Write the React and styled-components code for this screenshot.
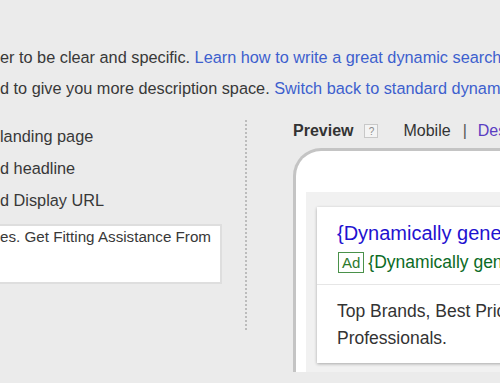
import React from 'react';
import styled, { createGlobalStyle } from 'styled-components';

const GlobalStyle = createGlobalStyle`
    html, body {
        margin: 0;
        padding: 0;
        background: #ebebeb;
        overflow: hidden;
    }

    body {
        font-family: "Liberation Sans", Arial, sans-serif;
        color: #333;
    }
`

const App = () => {
    return (
        <Page>
            <GlobalStyle />
            <Intro>
                <p>er to be clear and specific. <Link href="#">Learn how to write a great dynamic search ads</Link></p>
                <p>d to give you more description space. <Link href="#">Switch back to standard dynamic search ads</Link></p>
            </Intro>
            <Columns>
                <Options>
                    <li>landing page</li>
                    <li>d headline</li>
                    <li>d Display URL</li>
                    <TextBox>es. Get Fitting Assistance From</TextBox>
                </Options>
                <Divider />
                <PreviewPane>
                    <PreviewBar>
                        <strong>Preview</strong>
                        <Help>?</Help>
                        <Tab>Mobile</Tab>
                        <Sep>|</Sep>
                        <Tab as="a" href="#" $link>Desktop</Tab>
                    </PreviewBar>
                    <Phone>
                        <Screen>
                            <AdCard>
                                <AdHead>
                                    <Headline>{'{Dynamically generated headline}'}</Headline>
                                    <UrlRow>
                                        <Badge>Ad</Badge>
                                        <span>{'{Dynamically generated display URL}'}</span>
                                    </UrlRow>
                                </AdHead>
                                <AdBody>
                                    Top Brands, Best Prices. Get Fitting Assistance From Professionals.
                                </AdBody>
                            </AdCard>
                        </Screen>
                    </Phone>
                </PreviewPane>
            </Columns>
        </Page>
    );
};

const Page = styled.div`
    width: 500px;
    padding-top: 42px;
`

const Intro = styled.div`
    font-size: 16.3px;
    line-height: 31px;
    white-space: nowrap;
    color: #383838;

    p {
        margin: 0;
    }
`

const Link = styled.a`
    color: #3d5fce;
    text-decoration: none;
`

const Columns = styled.div`
    display: flex;
    align-items: flex-start;
    margin-top: 16px;
`

const Options = styled.ul`
    flex: none;
    width: 222px;
    margin: 0;
    padding: 0;
    list-style: none;
    font-size: 16.3px;
    line-height: 32px;
    white-space: nowrap;
    color: #383838;
`

const TextBox = styled.li`
    box-sizing: border-box;
    height: 60px;
    margin-top: 8px;
    padding-top: 1px;
    background: #fff;
    border: 2px solid #dedede;
    border-left: none;
    font-size: 15.2px;
    line-height: 20px;
    overflow: hidden;
`

const Divider = styled.div`
    flex: none;
    width: 0;
    height: 210px;
    margin-left: 23px;
    border-left: 2px dotted #bcbcbc;
`

const PreviewPane = styled.div`
    flex: none;
    width: 420px;
    margin-left: 46px;
`

const PreviewBar = styled.div`
    display: flex;
    align-items: center;
    height: 22px;
    font-size: 16px;
    white-space: nowrap;

    strong {
        color: #333;
    }
`

const Help = styled.span`
    box-sizing: border-box;
    display: flex;
    align-items: center;
    justify-content: center;
    width: 14px;
    height: 14px;
    margin-left: 11px;
    border: 1px solid #c8c8c8;
    background: #f4f4f4;
    color: #8a8a8a;
    font-size: 10px;
`

const Tab = styled.span`
    margin-left: ${p => (p.$link ? '0' : '25px')};
    color: ${p => (p.$link ? '#5a3dc2' : '#333')};
    text-decoration: none;
`

const Sep = styled.span`
    margin: 0 11px 0 12px;
    color: #555;
`

const Phone = styled.div`
    box-sizing: border-box;
    height: 224px;
    margin-top: 6px;
    padding: 41px 0 0 10px;
    background: #fff;
    border: 3px solid #c4c4c4;
    border-bottom: none;
    border-radius: 28px 28px 0 0;
`

const Screen = styled.div`
    box-sizing: border-box;
    height: 100%;
    padding: 15px 0 0 11px;
    background: #f1f1f1;
`

const AdCard = styled.div`
    box-sizing: border-box;
    width: 470px;
    height: 156px;
    background: #fff;
    box-shadow: 0 1px 3px rgba(0, 0, 0, 0.3);
`

const AdHead = styled.div`
    padding: 13px 20px 10px;
    border-bottom: 1px solid #e6e6e6;
    white-space: nowrap;
`

const Headline = styled.div`
    color: #1f12d0;
    font-size: 20px;
    line-height: 26px;
`

const UrlRow = styled.div`
    display: flex;
    align-items: center;
    height: 24px;
    margin-top: 4px;
    color: #0b6b25;
    font-size: 17.5px;
`

const Badge = styled.span`
    box-sizing: border-box;
    height: 21px;
    margin: 0 4px 0 1px;
    padding: 0 3px;
    border: 1px solid #4a914a;
    color: #2d7a2d;
    font-size: 15px;
    line-height: 19px;
`

const AdBody = styled.p`
    width: 430px;
    margin: 0;
    padding: 13px 20px 0;
    color: #333;
    font-size: 17.5px;
    line-height: 27px;
`

export default App;
